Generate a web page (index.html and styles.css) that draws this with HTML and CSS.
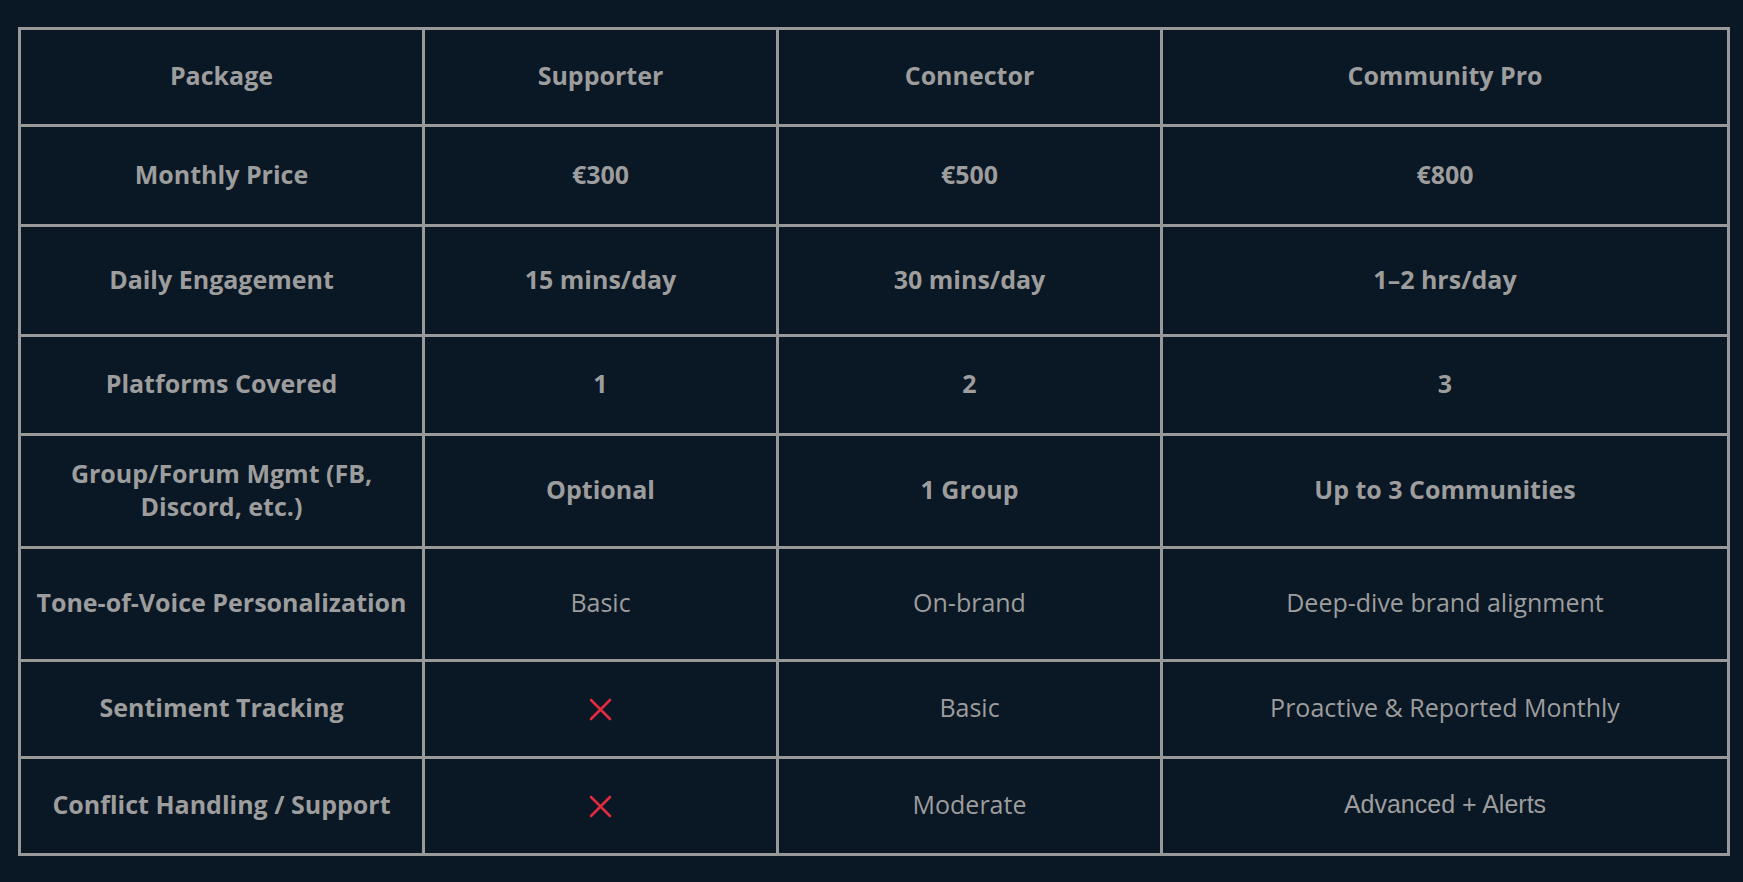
FILE: index.html
```html
<!DOCTYPE html>
<html lang="en">
<head>
<meta charset="utf-8">
<title>Community Packages</title>
<link rel="stylesheet" href="styles.css">
</head>
<body>
<div class="page">
  <table class="compare">
    <colgroup>
      <col class="c1"><col class="c2"><col class="c3"><col class="c4">
    </colgroup>
    <tbody>
      <tr class="h97 strong">
        <td>Package</td><td>Supporter</td><td>Connector</td><td>Community Pro</td>
      </tr>
      <tr class="h100 strong">
        <td>Monthly Price</td><td>€300</td><td>€500</td><td>€800</td>
      </tr>
      <tr class="h110 strong">
        <td>Daily Engagement</td><td>15 mins/day</td><td>30 mins/day</td><td>1–2 hrs/day</td>
      </tr>
      <tr class="h99 strong">
        <td>Platforms Covered</td><td>1</td><td>2</td><td>3</td>
      </tr>
      <tr class="h113 strong">
        <td>Group/Forum Mgmt (FB, Discord, etc.)</td><td>Optional</td><td>1 Group</td><td>Up to 3 Communities</td>
      </tr>
      <tr class="h113">
        <th>Tone-of-Voice Personalization</th><td>Basic</td><td>On-brand</td><td>Deep-dive brand alignment</td>
      </tr>
      <tr class="h97">
        <th>Sentiment Tracking</th>
        <td><svg class="cross" viewBox="0 0 23 23" aria-label="No"><path d="M2 2L21 21M21 2L2 21"/></svg></td>
        <td>Basic</td><td>Proactive &amp; Reported Monthly</td>
      </tr>
      <tr class="h97">
        <th>Conflict Handling / Support</th>
        <td><svg class="cross" viewBox="0 0 23 23" aria-label="No"><path d="M2 2L21 21M21 2L2 21"/></svg></td>
        <td>Moderate</td><td class="arial">Advanced + Alerts</td>
      </tr>
    </tbody>
  </table>
</div>
</body>
</html>
```
FILE: styles.css
```css
html, body {
  margin: 0;
  background: #0a1724;
}

.page {
  padding: 27px 0 0 18px;
}

.compare {
  border-collapse: collapse;
  table-layout: fixed;
  width: 1712px;
  font-family: "Open Sans", "Liberation Sans", sans-serif;
  font-size: 25px;
  line-height: 33px;
  color: #9d9d9d;
}

.c1 { width: 404px; }
.c2 { width: 354px; }
.c3 { width: 384px; }
.c4 { width: 567px; }

.compare td,
.compare th {
  border: 3px solid #999999;
  text-align: center;
  vertical-align: middle;
  padding: 0 12px 3px;
  font-weight: 400;
}

.compare th,
.compare .strong td {
  font-weight: 700;
}

.h97 { height: 97px; }
.h99 { height: 99px; }
.h100 { height: 100px; }
.h110 { height: 110px; }
.h113 { height: 113px; }

.arial {
  font-family: "Liberation Sans", Arial, sans-serif;
}

.cross {
  display: block;
  width: 23px;
  height: 23px;
  margin: 3px auto 0;
  fill: none;
  stroke: #e12a40;
  stroke-width: 2.6;
  stroke-linecap: round;
}
```
